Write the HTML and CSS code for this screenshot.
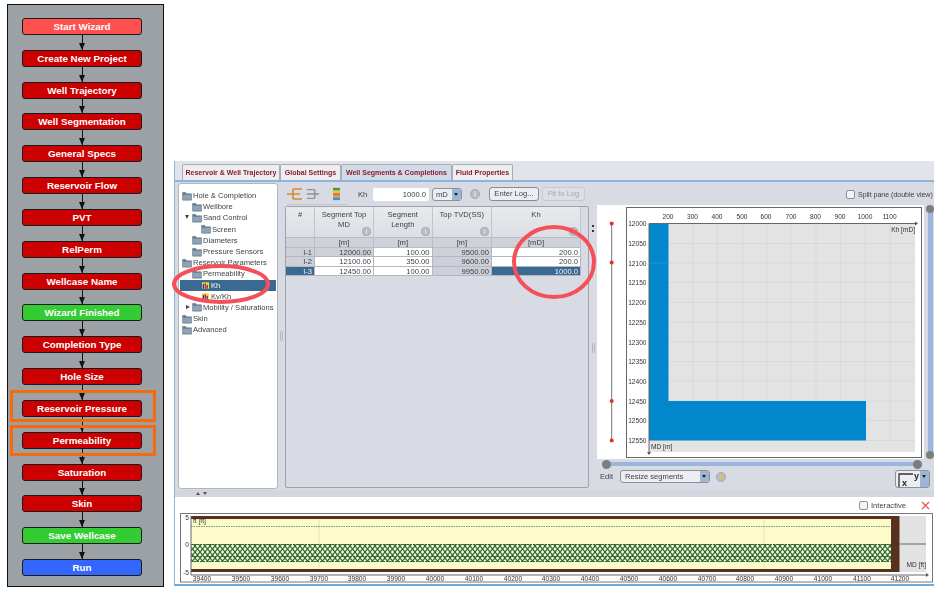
FILE: index.html
```html
<!DOCTYPE html>
<html lang="en">
<head>
<meta charset="utf-8">
<title>Reservoir wizard</title>
<link rel="stylesheet" href="styles.css">
</head>
<body>
<svg class="defs" width="0" height="0" aria-hidden="true">
  <defs>
    <symbol id="folder" viewBox="0 0 11 10">
      <path d="M.5 2V9a.6.6 0 0 0 .6.6H10a.6.6 0 0 0 .6-.6V3a.6.6 0 0 0-.6-.6H5L4 1H1a.6.6 0 0 0-.5 1z" fill="#5f7c96" stroke="#7d8791" stroke-width=".6"/>
      <rect x="1" y="3.6" width="9" height="5.4" fill="#8ea3b6"/>
    </symbol>
    <symbol id="kh" viewBox="0 0 9 8">
      <rect width="9" height="8" fill="#f4e61a"/>
      <rect x="1" y="2" width="1.6" height="6" fill="#3a1fb0"/>
      <rect x="3.4" y="1" width="1.6" height="7" fill="#c0108c"/>
      <rect x="5.8" y="3" width="1.6" height="5" fill="#3a1fb0"/>
    </symbol>
    <symbol id="info" viewBox="0 0 11 11">
      <circle cx="5.5" cy="5.5" r="5" fill="#b9bcc2" stroke="#9a9da3" stroke-width=".8"/>
      <rect x="5" y="4.6" width="1.2" height="3.6" fill="#eef0f3"/>
      <rect x="5" y="2.8" width="1.2" height="1.1" fill="#eef0f3"/>
    </symbol>
    <pattern id="hatch" width="5" height="6" patternUnits="userSpaceOnUse">
      <path d="M0 0L5 6M5 0L0 6" stroke="#2f6a30" stroke-width="1.2"/>
    </pattern>
  </defs>
</svg>

<aside class="wizard">
  <div class="step step-light">Start Wizard</div><div class="link"></div>
  <div class="step">Create New Project</div><div class="link"></div>
  <div class="step">Well Trajectory</div><div class="link"></div>
  <div class="step">Well Segmentation</div><div class="link"></div>
  <div class="step">General Specs</div><div class="link"></div>
  <div class="step">Reservoir Flow</div><div class="link"></div>
  <div class="step">PVT</div><div class="link"></div>
  <div class="step">RelPerm</div><div class="link"></div>
  <div class="step">Wellcase Name</div><div class="link"></div>
  <div class="step step-green">Wizard Finished</div><div class="link"></div>
  <div class="step">Completion Type</div><div class="link"></div>
  <div class="step">Hole Size</div><div class="link"></div>
  <div class="step">Reservoir Pressure</div><div class="link"></div>
  <div class="step">Permeability</div><div class="link"></div>
  <div class="step">Saturation</div><div class="link"></div>
  <div class="step">Skin</div><div class="link"></div>
  <div class="step step-green">Save Wellcase</div><div class="link"></div>
  <div class="step step-blue">Run</div>
  <div class="mark mark-pressure"></div>
  <div class="mark mark-perm"></div>
</aside>

<main class="app">
  <nav class="tabs">
    <span class="tab tab-1">Reservoir &amp; Well Trajectory</span>
    <span class="tab tab-2">Global Settings</span>
    <span class="tab tab-3 tab-active">Well Segments &amp; Completions</span>
    <span class="tab tab-4">Fluid Properties</span>
  </nav>

  <div class="main">
    <ul class="tree">
      <li class="node d0"><svg class="fold"><use href="#folder"/></svg>Hole &amp; Completion</li>
      <li class="node d1"><svg class="fold"><use href="#folder"/></svg>Wellbore</li>
      <li class="node d1 open"><svg class="fold"><use href="#folder"/></svg>Sand Control</li>
      <li class="node d2"><svg class="fold"><use href="#folder"/></svg>Screen</li>
      <li class="node d1"><svg class="fold"><use href="#folder"/></svg>Diameters</li>
      <li class="node d1"><svg class="fold"><use href="#folder"/></svg>Pressure Sensors</li>
      <li class="node d0"><svg class="fold"><use href="#folder"/></svg>Reservoir Parameters</li>
      <li class="node d1"><svg class="fold"><use href="#folder"/></svg>Permeability</li>
      <li class="node d2 leaf selected"><svg class="leaf-icon"><use href="#kh"/></svg>Kh</li>
      <li class="node d2 leaf"><svg class="leaf-icon"><use href="#kh"/></svg>Kv/Kh</li>
      <li class="node d1 closed"><svg class="fold"><use href="#folder"/></svg>Mobility / Saturations</li>
      <li class="node d0"><svg class="fold"><use href="#folder"/></svg>Skin</li>
      <li class="node d0"><svg class="fold"><use href="#folder"/></svg>Advanced</li>
    </ul>
    <div class="sash-v"><span class="grip"></span></div>
    <section class="work">
      <div class="toolbar">
        <div class="tool-group">
          <svg class="tool-icon" viewBox="0 0 16 14"><path d="M0 7H6M6 2H15M6 7H13M6 12H15M6 2V12" fill="none" stroke="#d98a2a" stroke-width="1.6"/></svg>
          <svg class="tool-icon tool-grey" viewBox="0 0 16 14"><path d="M1 2H10M1 7H15M1 12H10M10 2V12" fill="none" stroke="#8d9094" stroke-width="1.6"/></svg>
          <svg class="tool-bars" viewBox="0 0 8 14">
            <rect width="8" height="3" fill="#3f9a45"/><rect y="3" width="8" height="3" fill="#e8c62c"/><rect y="6" width="8" height="3" fill="#e3702b"/><rect y="9" width="8" height="2" fill="#d8a050"/><rect y="11" width="8" height="3" fill="#3d8fd6"/>
          </svg>
        </div>
        <label class="kh-label">Kh</label>
        <span class="input">1000.0</span>
        <span class="select unit">mD<i class="drop"></i></span>
        <svg class="info"><use href="#info"/></svg>
        <span class="btn btn-log">Enter Log...</span>
        <span class="btn btn-off">Fit to Log</span>
        <span class="split"><i class="check"></i>Split pane (double view)</span>
      </div>
      <div class="panes">
        <div class="table-pane">
          <div class="grid">
            <div class="hd">#</div>
            <div class="hd">Segment Top<br>MD<svg class="hd-info"><use href="#info"/></svg></div>
            <div class="hd">Segment<br>Length<svg class="hd-info"><use href="#info"/></svg></div>
            <div class="hd">Top TVD(SS)<svg class="hd-info"><use href="#info"/></svg></div>
            <div class="hd">Kh<svg class="hd-info"><use href="#info"/></svg></div>

            <div class="un"></div><div class="un">[m]</div><div class="un">[m]</div><div class="un">[m]</div><div class="un">[mD]</div>

            <div class="c ro">I-1</div><div class="c ro">12000.00</div><div class="c">100.00</div><div class="c ro">9500.00</div><div class="c">200.0</div>
            <div class="c ro">I-2</div><div class="c">12100.00</div><div class="c">350.00</div><div class="c ro">9600.00</div><div class="c">200.0</div>
            <div class="c sel">I-3</div><div class="c">12450.00</div><div class="c">100.00</div><div class="c ro">9950.00</div><div class="c sel">1000.0</div>
          </div>
        </div>
        <div class="sash-mid"><span class="nub"></span><span class="nub"></span><span class="grip"></span></div>
        <div class="chart-pane">
          <svg class="log-chart" viewBox="597 205 337 257">
            <rect x="597" y="205" width="327" height="254" fill="#fff"/>
            <rect x="924" y="205" width="10" height="257" fill="#d8dbe3"/>
            <rect x="928" y="210" width="5" height="245" fill="#9ab6dc"/>
            <circle cx="930" cy="209" r="4" fill="#7b7d80"/>
            <circle cx="930" cy="455" r="4" fill="#7b7d80"/>
            <path d="M611.7 223.5V440.5" stroke="#777" stroke-width="1"/>
            <g fill="#ee2a30"><circle cx="611.7" cy="223.5" r="2"/><circle cx="611.7" cy="262.5" r="2"/><circle cx="611.7" cy="401" r="2"/><circle cx="611.7" cy="440.5" r="2"/></g>
            <rect x="626.5" y="207.5" width="295" height="250" fill="#fff" stroke="#666"/>
            <rect x="649" y="223.5" width="266" height="228.5" fill="#e3e3e3"/>
            <g stroke="#d9d9d9" stroke-width="1">
              <path d="M693 223V440M717.5 223V440M742.500 223V440M766.500 223V440M791 223V440M816 223V440M840.500 223V440M865.500 223V440M890 223V440"/>
              <path d="M649 243.500H915M649 263H915M649 282.500H915M649 302.500H915M649 322H915M649 342H915M649 361.500H915M649 381H915M649 401H915M649 420.500H915M649 440.500H915"/>
            </g>
            <path d="M649 223.500H668.500V401H866V440.500H649Z" fill="#0087cc"/>
            <path d="M649 263H668.500" stroke="#2b93cf"/>
            <path d="M649 223.500H915M649 223.500V454" stroke="#666" fill="none"/>
            <path d="M915 221.500L918 223.500L915 225.500ZM647 452L649 455L651 452Z" fill="#555"/>
            <g class="tx" text-anchor="middle">
              <text x="668" y="219">200</text><text x="692.500" y="219">300</text><text x="717" y="219">400</text><text x="742" y="219">500</text><text x="766" y="219">600</text><text x="791" y="219">700</text><text x="815.500" y="219">800</text><text x="840" y="219">900</text><text x="865" y="219">1000</text><text x="889.500" y="219">1100</text>
            </g>
            <g class="tx" text-anchor="end">
              <text x="646.500" y="226">12000</text><text x="646.500" y="246">12050</text><text x="646.500" y="265.500">12100</text><text x="646.500" y="285">12150</text><text x="646.500" y="305">12200</text><text x="646.500" y="324.500">12250</text><text x="646.500" y="344.500">12300</text><text x="646.500" y="364">12350</text><text x="646.500" y="383.500">12400</text><text x="646.500" y="403.500">12450</text><text x="646.500" y="423">12500</text><text x="646.500" y="443">12550</text>
              <text x="915" y="232">Kh [mD]</text>
            </g>
            <text class="tx" x="651" y="449">MD [m]</text>
          </svg>
          <div class="h-slider"><i class="knob"></i><i class="knob"></i></div>
          <div class="edit-row">
            <span class="edit-label">Edit</span>
            <span class="select mode">Resize segments<i class="drop"></i></span>
            <svg class="info info-warn" viewBox="0 0 11 11"><circle cx="5.500" cy="5.500" r="5" fill="#b9bcc2" stroke="#9a9da3" stroke-width=".8"/><rect x="4.800" y="2.500" width="1.500" height="6" fill="#e6c81e"/></svg>
            <span class="axes">
              <svg class="axes-icon" viewBox="0 0 22 15"><path d="M1 15V2H15" fill="none" stroke="#333" stroke-width="1.300"/><text class="axes-tx" x="4" y="14">x</text><text class="axes-tx" x="16" y="7">y</text></svg>
              <i class="drop"></i>
            </span>
          </div>
        </div>
      </div>
    </section>
  </div>

  <div class="sash-h"><span class="tri tri-up"></span><span class="tri tri-down"></span></div>

  <section class="bottom">
    <div class="bottom-bar">
      <span class="interactive"><i class="check"></i>Interactive</span>
      <svg class="close" viewBox="0 0 9 9"><path d="M1 1L8 8M8 1L1 8" stroke="#f0564e" stroke-width="1.300"/></svg>
    </div>
    <svg class="traj" viewBox="180 513 754 70">
      <rect x="180.500" y="513.500" width="752" height="68.500" fill="#fff" stroke="#777"/>
      <rect x="191" y="516" width="700" height="56" fill="#fdfbca"/>
      <rect x="899" y="516" width="27" height="56" fill="#e2e2e2"/>
      <path d="M319 519V569M764 519V569" stroke="#e8e3b0"/>
      <rect x="191" y="516" width="708" height="3" fill="#57301f"/>
      <rect x="191" y="569" width="708" height="3" fill="#57301f"/>
      <rect x="891" y="516" width="8.500" height="56" fill="#57301f"/>
      <path d="M899 544H926" stroke="#666"/>
      <path d="M191 526.500H891" stroke="#6f9a6c" stroke-dasharray="1.500 1"/>
      <rect x="191" y="544" width="700" height="18" fill="#f6f7dc"/>
      <rect x="191" y="544" width="700" height="18" fill="url(#hatch)"/>
      <path d="M191 544.500H891M191 556.500H891M191 561.500H891" stroke="#2f6a30" stroke-width="1" stroke-dasharray="2 1"/>
      <path d="M191 516V575M191 575H926" stroke="#666" fill="none"/>
      <path d="M926 573L929 575L926 577Z" fill="#555"/>
      <g class="tx" text-anchor="end">
        <text x="189" y="520">5</text><text x="189" y="547">0</text><text x="189" y="575">-5</text>
      </g>
      <text class="tx" x="193" y="523">ft [ft]</text>
      <text class="tx" text-anchor="end" x="926" y="567">MD [ft]</text>
      <g class="tx" text-anchor="middle">
        <text x="202" y="581">39400</text><text x="241" y="581">39500</text><text x="280" y="581">39600</text><text x="319" y="581">39700</text><text x="357" y="581">39800</text><text x="396" y="581">39900</text><text x="435" y="581">40000</text><text x="474" y="581">40100</text><text x="513" y="581">40200</text><text x="551" y="581">40300</text><text x="590" y="581">40400</text><text x="629" y="581">40500</text><text x="668" y="581">40600</text><text x="707" y="581">40700</text><text x="745" y="581">40800</text><text x="784" y="581">40900</text><text x="823" y="581">41000</text><text x="862" y="581">41100</text><text x="900" y="581">41200</text>
      </g>
    </svg>
  </section>
</main>

<svg class="ring ring-tree" viewBox="0 0 100 42"><ellipse cx="50" cy="21" rx="47" ry="18" fill="none" stroke="#f4505a" stroke-width="4"/></svg>
<svg class="ring ring-kh" viewBox="0 0 88 78"><ellipse cx="44" cy="39" rx="40" ry="35" fill="none" stroke="#f4505a" stroke-width="4"/></svg>
</body>
</html>
```

FILE: styles.css
```css
* { box-sizing: border-box; }
html, body { margin: 0; padding: 0; }
body {
  width: 940px;
  height: 591px;
  overflow: hidden;
  background: #fff;
  display: flex;
  align-items: flex-start;
  position: relative;
  font-family: "Liberation Sans", Arial, sans-serif;
}
.defs { position: absolute; }

/* wizard column */
.wizard {
  position: relative;
  width: 157px;
  height: 583px;
  margin: 4px 0 0 7px;
  padding: 13px 21px 10px 14px;
  border: 1px solid #111;
  background: #9ca1a6;
  display: flex;
  flex-direction: column;
  flex: none;
}
.step {
  height: 17px;
  flex: none;
  border: 1px solid #1a1a1a;
  border-radius: 3px;
  background: #cc0000;
  color: #fff;
  font: bold 9.8px/15px "Liberation Sans", Arial, sans-serif;
  text-align: center;
}
.step-light { background: #ff5050; }
.step-green { background: #33cc33; }
.step-blue { background: #3366ff; }
.link {
  flex: 1;
  position: relative;
  width: 1px;
  margin-left: 60px;
  background: #111;
}
.link::after {
  content: "";
  position: absolute;
  left: -3px;
  bottom: 0;
  border-left: 3.5px solid transparent;
  border-right: 3.5px solid transparent;
  border-top: 7px solid #111;
}
.mark {
  position: absolute;
  left: 2px;
  width: 146px;
  border: 3px solid #f56a0e;
}
.mark-pressure { top: 385px; height: 32px; }
.mark-perm { top: 420px; height: 31px; }

/* application window */
.app {
  width: 760px;
  height: 425px;
  margin: 161px 0 0 10px;
  flex: none;
  background: #d8dbe3;
  border-left: 1px solid #8fb4dc;
  border-bottom: 2px solid #6fa9e0;
  display: flex;
  flex-direction: column;
  overflow: hidden;
  color: #3d3f44;
  font-size: 7.6px;
  filter: blur(.35px);
}
.tabs {
  height: 21px;
  flex: none;
  padding: 3px 0 0 7px;
  display: flex;
  background: #e2e4ea;
  border-bottom: 2px solid #8fb4dc;
}
.tab {
  height: 16px;
  flex: none;
  border: 1px solid #a9acb2;
  border-bottom: 0;
  border-radius: 2px 2px 0 0;
  background: #eceef2;
  color: #8b1c2c;
  font: bold 7px/15px "Liberation Sans", Arial, sans-serif;
  text-align: center;
  white-space: nowrap;
}
.tab-1 { width: 98px; }
.tab-2 { width: 61px; }
.tab-3 { width: 111px; }
.tab-4 { width: 61px; }
.tab-active { background: #cfdbe9; }

.main { height: 308px; flex: none; display: flex; }
.tree {
  width: 100px;
  height: 306px;
  margin: 1px 0 0 3px;
  padding: 6px 1px 0;
  flex: none;
  list-style: none;
  background: #fff;
  border: 1px solid #b2b5bb;
  border-radius: 3px;
}
.node {
  height: 11.2px;
  display: flex;
  align-items: center;
  position: relative;
  white-space: nowrap;
  line-height: 11px;
}
.d0 { padding-left: 2px; }
.d1 { padding-left: 12px; }
.d2 { padding-left: 21px; }
.leaf { padding-left: 22px; }
.fold { width: 10px; height: 10px; margin-right: 1px; flex: none; }
.leaf-icon { width: 7px; height: 7px; margin-right: 2px; flex: none; }
.selected { background: #3a6a91; color: #fff; }
.open::before, .closed::before {
  content: "";
  position: absolute;
  left: 5px;
}
.open::before {
  top: 3px;
  border-left: 2px solid transparent;
  border-right: 2px solid transparent;
  border-top: 4px solid #444;
}
.closed::before {
  top: 3px;
  left: 6px;
  border-top: 2px solid transparent;
  border-bottom: 2px solid transparent;
  border-left: 4px solid #444;
}
.sash-v {
  width: 7px;
  flex: none;
  display: flex;
  align-items: center;
  justify-content: center;
}
.grip { display: block; width: 3px; height: 10px; border: 1px solid #b0b3b9; border-radius: 2px; }
.work { flex: 1; min-width: 0; display: flex; flex-direction: column; }
.toolbar {
  height: 23px;
  flex: none;
  display: flex;
  align-items: center;
  padding: 1px 0 0 2px;
}
.tool-group {
  width: 61px;
  height: 21px;
  flex: none;
  display: flex;
  align-items: center;
  border-bottom: 1px solid #c2c5cb;
  margin-right: 10px;
}
.tool-icon { width: 16px; height: 14px; flex: none; margin-right: 3px; }
.tool-grey { width: 14px; margin-right: 13px; }
.tool-bars { width: 7px; height: 14px; flex: none; }
.kh-label { width: 15px; flex: none; }
.input {
  width: 56px;
  height: 13px;
  flex: none;
  background: #fff;
  text-align: right;
  line-height: 13px;
  padding-right: 3px;
  border-radius: 2px;
}
.select {
  height: 13px;
  flex: none;
  position: relative;
  display: block;
  background: #eceef2;
  border: 1px solid #8d9299;
  border-radius: 3px;
  line-height: 11px;
  padding-left: 3px;
}
.drop {
  position: absolute;
  right: 0;
  top: 0;
  bottom: 0;
  width: 9px;
  background: #9cb6d6;
}
.drop::after {
  content: "";
  position: absolute;
  left: 2px;
  top: 4px;
  border-left: 2.500px solid transparent;
  border-right: 2.500px solid transparent;
  border-top: 3.500px solid #222;
}
.unit { width: 30px; margin-left: 3px; }
.info { width: 10px; height: 10px; flex: none; margin-left: 8px; }
.btn {
  height: 14px;
  flex: none;
  border: 1px solid #888c93;
  border-radius: 3px;
  background: #eceef2;
  text-align: center;
  line-height: 12px;
}
.btn-log { width: 50px; margin-left: 9px; }
.btn-off { width: 43px; margin-left: 3px; color: #a5a8ae; border-color: #c6c9cf; background: #dcdfe5; }
.split {
  display: flex;
  align-items: center;
  white-space: nowrap;
  margin: 0 0 0 261px;
  flex: none;
  font-size: 7px;
}
.check {
  width: 9px;
  height: 9px;
  margin-right: 3px;
  flex: none;
  border: 1px solid #8d9299;
  border-radius: 2px;
  background: #f2f3f6;
}
.panes { flex: 1; min-height: 0; display: flex; }
.table-pane {
  width: 304px;
  height: 282px;
  margin-top: 1px;
  flex: none;
  border: 1px solid #9fa2a8;
  border-radius: 2px;
  background: #d8dbe3;
}
.grid {
  width: 295px;
  display: grid;
  grid-template-columns: 29px 59px 58.500px 59.500px 89px;
  grid-template-rows: 31px 10px 9.333px 9.333px 9.333px;
  line-height: 9.500px;
}
.hd {
  position: relative;
  text-align: center;
  padding-top: 3px;
  line-height: 10px;
  background: linear-gradient(#e9eaee, #dcdee3);
  border-right: 1px solid #c2c5cb;
  border-bottom: 1px solid #b9bcc2;
}
.hd-info { position: absolute; right: 2px; bottom: 1px; width: 9px; height: 9px; }
.un {
  text-align: center;
  background: #ced1d8;
  border-right: 1px solid #b9bcc2;
  border-bottom: 1px solid #b9bcc2;
}
.c {
  background: #fff;
  text-align: right;
  padding-right: 2px;
  border-right: 1px solid #b4b7bd;
  border-bottom: 1px solid #b4b7bd;
  line-height: 9.500px;
}
.ro { background: #cdd0d8; }
.sel { background: #3a6a91; color: #eef2f6; }
.sash-mid {
  width: 8px;
  flex: none;
  padding-top: 20px;
  display: flex;
  flex-direction: column;
  align-items: center;
}
.nub { width: 2px; height: 2px; margin-bottom: 3px; background: #333; }
.sash-mid .grip { margin-top: 108px; }
.chart-pane { flex: 1; min-width: 0; display: flex; flex-direction: column; }
.log-chart { display: block; width: 337px; height: 257px; flex: none; }
.tx { font: 6.600px "Liberation Sans", Arial, sans-serif; fill: #333; }
.h-slider {
  height: 4px;
  margin: 0 12px 0 5px;
  flex: none;
  display: flex;
  justify-content: space-between;
  align-items: center;
  background: #9ab6dc;
}
.knob { width: 9px; height: 9px; flex: none; border-radius: 50%; background: #7b7d80; }
.edit-row {
  display: flex;
  align-items: flex-start;
  padding: 4px 0 0 3px;
}
.edit-label { width: 20px; flex: none; line-height: 13px; }
.mode { width: 90px; padding-left: 4px; }
.info-warn { margin-left: 6px; margin-top: 1.500px; }
.axes {
  position: relative;
  width: 35px;
  height: 18px;
  margin-left: 169px;
  flex: none;
  background: #eceef2;
  border: 1px solid #8d9299;
  border-radius: 3px;
}
.axes-icon { position: absolute; left: 2px; top: 1px; width: 22px; height: 15px; }
.axes-tx { font: bold 9px "Liberation Sans", Arial, sans-serif; fill: #222; }

.sash-h {
  height: 7px;
  flex: none;
  padding: 2px 0 0 21px;
  display: flex;
  gap: 3px;
  background: #d3d6dd;
}
.tri { width: 0; height: 0; border-left: 2px solid transparent; border-right: 2px solid transparent; }
.tri-up { border-bottom: 3px solid #555; }
.tri-down { border-top: 3px solid #555; }

.bottom { flex: 1; min-height: 0; background: #fff; display: flex; flex-direction: column; }
.bottom-bar {
  height: 16px;
  flex: none;
  display: flex;
  align-items: center;
  justify-content: flex-end;
  padding-right: 4px;
}
.interactive { display: flex; align-items: center; }
.close { width: 9px; height: 9px; margin-left: 15px; }
.traj { display: block; width: 754px; height: 70px; margin-left: 5px; flex: none; }

/* hand-drawn callouts */
.ring { position: absolute; }
.ring-tree { left: 171px; top: 263px; width: 100px; height: 42px; }
.ring-kh { left: 510px; top: 223px; width: 88px; height: 78px; }
```
